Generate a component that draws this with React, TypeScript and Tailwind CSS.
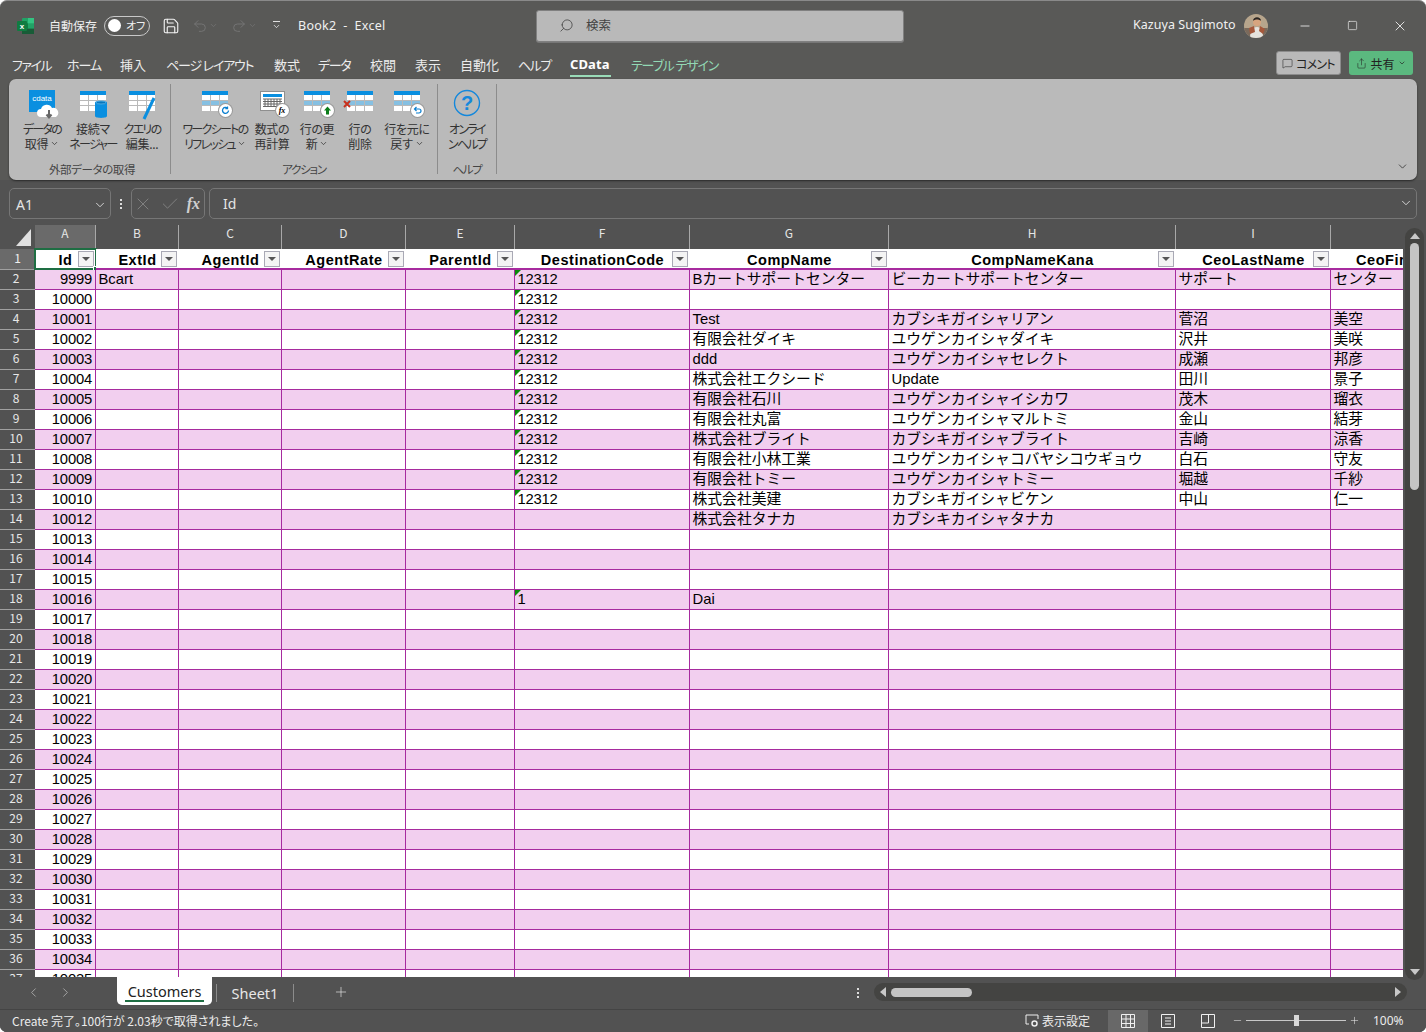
import React from 'react';
import { ChevronDown, ChevronLeft, ChevronRight, Minus, Plus, Square, X, Check, Search, Save, Undo2, Redo2, MessageSquare, Share } from 'lucide-react';

const ui = "[font-family:'Noto_Sans_CJK_JP','Noto_Sans',sans-serif] [font-feature-settings:'palt']";

const menus: [string, string, string][] = [
  ['ファイル', 'w-[55px]', 'tracking-[-1.5px]'],
  ['ホーム', 'w-[53px]', 'tracking-[-1px]'],
  ['挿入', 'w-[46px]', ''],
  ['ページ レイアウト', 'w-[108px]', 'tracking-[-1.2px]'],
  ['数式', 'w-[44px]', ''],
  ['データ', 'w-[52px]', 'tracking-[-1.3px]'],
  ['校閲', 'w-[45px]', ''],
  ['表示', 'w-[45px]', ''],
  ['自動化', 'w-[58px]', ''],
  ['ヘルプ', 'w-[52px]', 'tracking-[-1.5px]'],
];

const columns = [
  { letter: 'A', name: 'Id', width: 'w-[61px]' },
  { letter: 'B', name: 'ExtId', width: 'w-[83px]' },
  { letter: 'C', name: 'AgentId', width: 'w-[103px]' },
  { letter: 'D', name: 'AgentRate', width: 'w-[124px]' },
  { letter: 'E', name: 'ParentId', width: 'w-[109px]' },
  { letter: 'F', name: 'DestinationCode', width: 'w-[175px]' },
  { letter: 'G', name: 'CompName', width: 'w-[199px]' },
  { letter: 'H', name: 'CompNameKana', width: 'w-[287px]' },
  { letter: 'I', name: 'CeoLastName', width: 'w-[155px]' },
  { letter: '', name: 'CeoFirstName', width: 'w-[155px]' },
];

const filled: Record<number, string[]> = {
  2: ['Bcart', '12312', 'Bカートサポートセンター', 'ビーカートサポートセンター', 'サポート', 'センター'],
  3: ['', '12312', '', '', '', ''],
  4: ['', '12312', 'Test', 'カブシキガイシャリアン', '菅沼', '美空'],
  5: ['', '12312', '有限会社ダイキ', 'ユウゲンカイシャダイキ', '沢井', '美咲'],
  6: ['', '12312', 'ddd', 'ユウゲンカイシャセレクト', '成瀬', '邦彦'],
  7: ['', '12312', '株式会社エクシード', 'Update', '田川', '景子'],
  8: ['', '12312', '有限会社石川', 'ユウゲンカイシャイシカワ', '茂木', '瑠衣'],
  9: ['', '12312', '有限会社丸富', 'ユウゲンカイシャマルトミ', '金山', '結芽'],
  10: ['', '12312', '株式会社ブライト', 'カブシキガイシャブライト', '吉崎', '涼香'],
  11: ['', '12312', '有限会社小林工業', 'ユウゲンカイシャコバヤシコウギョウ', '白石', '守友'],
  12: ['', '12312', '有限会社トミー', 'ユウゲンカイシャトミー', '堀越', '千紗'],
  13: ['', '12312', '株式会社美建', 'カブシキガイシャビケン', '中山', '仁一'],
  14: ['', '', '株式会社タナカ', 'カブシキカイシャタナカ', '', ''],
  18: ['', '1', 'Dai', '', '', ''],
};

const rowId = (n: number) => (n === 2 ? 9999 : n <= 13 ? 9997 + n : 9998 + n);
const rowNumbers = Array.from({ length: 36 }, (_, i) => i + 2);

// kana-only ribbon lines sit tighter than kanji in the original UI font
const isKana = (s: string) => /^[ァ-ヶーの]+$/.test(s);

// table glyph used by most of the ribbon buttons
const TableIcon = ({ band = false }: { band?: boolean }) => (
  <svg width="26" height="20" viewBox="0 0 26 20" className="block">
    <rect x="0" y="0" width="26" height="20" fill="#fff" />
    <rect x="0" y="0" width="26" height="4" fill="#0a8fe0" />
    {band && <rect x="0" y="10" width="26" height="4" fill="#86c0e2" />}
    <path d="M0 9.500H26M0 14.500H26M8.500 4V20M17.500 4V20" stroke="#b9b9b9" strokeWidth="1" />
  </svg>
);

const Badge = ({ children }: { children: React.ReactNode }) => (
  <span className="absolute right-[-4px] bottom-[-6px] flex h-[13px] w-[13px] items-center justify-center rounded-full bg-white shadow-[0_0_0_1px_#9a9a9a]">
    {children}
  </span>
);

const DataIcon = () => (
  <svg width="30" height="30" viewBox="0 0 30 30" className="-mt-[1px] ml-[4px] block">
    <rect x="0" y="0" width="26" height="22" fill="#0a8fe0" />
    <text x="13" y="11" textAnchor="middle" fontSize="8" fill="#fff" fontFamily="'Liberation Sans'">cdata</text>
    <path d="M12 27a4 4 0 0 1 0-8 6 6 0 0 1 11-1 5 5 0 0 1 4 9z" fill="#fff" />
    <path d="M20 20v7m-2.500-2.500 2.500 3 2.500-3" stroke="#666" strokeWidth="2" fill="none" />
  </svg>
);

const ConnIcon = () => (
  <div className="relative">
    <TableIcon />
    <svg width="12" height="18" viewBox="0 0 12 18" className="absolute right-[-1px] top-[9px]">
      <path d="M0 2.500C0 0 12 0 12 2.500V16c0 2.500-12 2.500-12 0z" fill="#0a8fe0" />
      <ellipse cx="6" cy="2.500" rx="5" ry="1.500" fill="#0877bd" stroke="#7cc4ee" strokeWidth=".6" />
    </svg>
  </div>
);

const QueryIcon = () => (
  <div className="relative">
    <TableIcon />
    <svg width="14" height="28" viewBox="0 0 14 28" className="absolute right-[-1px] top-[6px]">
      <path d="M12 1 2 22" stroke="#0a8fe0" strokeWidth="3" />
    </svg>
  </div>
);

const RefreshIcon = () => (
  <div className="relative">
    <TableIcon band />
    <Badge>
      <svg width="9" height="9" viewBox="0 0 9 9"><path d="M7.500 4.500a3 3 0 1 1-1-2.300M6.500 .5v2.200H4.300" stroke="#0a7fd0" strokeWidth="1.300" fill="none" /></svg>
    </Badge>
  </div>
);

const RecalcIcon = () => (
  <div className="relative">
    <svg width="25" height="20" viewBox="0 0 25 20" className="block">
      <rect x=".5" y=".5" width="24" height="19" fill="#fff" stroke="#8f8f8f" />
      <rect x="3" y="3" width="19" height="3" fill="#0a8fe0" />
      <path d="M3 8h19M3 10.500h19M3 13h19M3 15.500h19M5 8v8M8 8v8M11 8v8M14 8v8M17 8v8M20 8v8" stroke="#666" strokeWidth="1" />
    </svg>
    <Badge><span className="text-[8px] leading-none italic font-bold text-black [font-family:'Liberation_Serif',serif]">fx</span></Badge>
  </div>
);

const UpdateIcon = () => (
  <div className="relative">
    <TableIcon band />
    <Badge>
      <svg width="9" height="9" viewBox="0 0 9 9"><path d="M4.500 .5 8 4.500H6V8.500H3V4.500H1z" fill="#0c7d1a" /></svg>
    </Badge>
  </div>
);

const DeleteIcon = () => (
  <div className="relative">
    <TableIcon band />
    <svg width="8" height="8" viewBox="0 0 8 8" className="absolute left-[-4px] top-[9px]">
      <path d="M1 1 7 7M7 1 1 7" stroke="#c8301c" strokeWidth="2" />
    </svg>
  </div>
);

const RevertIcon = () => (
  <div className="relative">
    <TableIcon band />
    <Badge>
      <svg width="9" height="9" viewBox="0 0 9 9"><path d="M2 3h4a2 2 0 0 1 0 4H3M3.500 1 1.500 3l2 2" stroke="#0a7fd0" strokeWidth="1.200" fill="none" /></svg>
    </Badge>
  </div>
);

const HelpIcon = () => (
  <svg width="28" height="28" viewBox="0 0 28 28" className="block">
    <circle cx="14" cy="14" r="12.500" fill="none" stroke="#1488dc" strokeWidth="1.400" />
    <text x="14" y="21" textAnchor="middle" fontSize="20" fontWeight="700" fill="#1488dc" fontFamily="'Liberation Sans'">?</text>
  </svg>
);

const RibbonButton = ({ icon, lines, caret, width, top = 'h-[37px]' }: { icon: React.ReactNode; lines: string[]; caret?: boolean; width: string; top?: string }) => (
  <div className={`flex shrink-0 flex-col items-center ${width}`}>
    <div className={`flex items-start justify-center pt-[7px] ${top}`}>{icon}</div>
    <div className="flex flex-col items-center text-[12px] leading-[15px] text-[#333] whitespace-nowrap">
      <span className={isKana(lines[0]) ? 'tracking-[-1.7px]' : 'tracking-[-0.3px]'}>{lines[0]}</span>
      <span className="flex items-center gap-[2px]">
        <span className={isKana(lines[1]) ? 'tracking-[-1.7px]' : 'tracking-[-0.3px]'}>{lines[1]}</span>
        {caret && <ChevronDown size={9} strokeWidth={2} />}
      </span>
    </div>
  </div>
);

const RibbonGroup = ({ label, width, inset = '', children }: { label: string; width: string; inset?: string; children: React.ReactNode }) => (
  <div className={`flex shrink-0 flex-col border-r border-[#8c8c8c] ${width}`}>
    <div className={`flex flex-1 ${inset}`}>{children}</div>
    <div className={`-mb-[3px] text-center text-[11.500px] leading-[16px] text-[#444] ${isKana(label) ? 'tracking-[-1.200px]' : 'pr-[4px] tracking-[-0.4px]'}`}>{label}</div>
  </div>
);

const TitleBar = () => (
  <div className="flex h-[49px] shrink-0 items-center text-[12px] text-[#f0f0f0]">
    <svg width="18" height="18" viewBox="0 0 18 18" className="ml-[17px] shrink-0">
      <rect x="5" y="1" width="12" height="16" rx="1" fill="#21a366" />
      <rect x="11" y="1" width="6" height="5.300" fill="#33c481" />
      <rect x="5" y="6.300" width="6" height="5.300" fill="#107c41" />
      <rect x="5" y="11.600" width="12" height="5.400" fill="#185c37" />
      <rect x="0" y="4" width="10" height="10" rx="1" fill="#107c41" />
      <text x="5" y="12" textAnchor="middle" fontSize="8" fontWeight="700" fill="#fff" fontFamily="'Liberation Sans'">x</text>
    </svg>
    <span className="ml-[14px] w-[55px] shrink-0">自動保存</span>
    <div className="flex h-[20px] w-[46px] shrink-0 items-center gap-[5px] rounded-full border border-[#c8c8c8] pl-[3px] text-[11px]">
      <span className="h-[13px] w-[13px] rounded-full bg-white" />
      <span>オフ</span>
    </div>
    <Save size={18} strokeWidth={1.500} className="ml-[12px] shrink-0 text-[#f4f4f4]" />
    <Undo2 size={16} strokeWidth={1.500} className="ml-[12px] shrink-0 text-[#747474]" />
    <ChevronDown size={9} className="ml-[1px] shrink-0 text-[#747474]" />
    <Redo2 size={16} strokeWidth={1.500} className="ml-[13px] shrink-0 text-[#747474]" />
    <ChevronDown size={9} className="ml-[1px] shrink-0 text-[#747474]" />
    <div className="ml-[14px] flex w-[10px] shrink-0 flex-col items-center">
      <span className="mb-[1px] h-px w-[7px] bg-[#e0e0e0]" />
      <ChevronDown size={9} strokeWidth={2} className="-mt-[1px]" />
    </div>
    <span className="ml-[17px] w-[238px] shrink-0 whitespace-pre pt-[1px] text-[12.500px] tracking-[0.25px] [font-family:'Noto_Sans',sans-serif]">Book2  -  Excel</span>
    <div className="flex h-[32px] w-[368px] shrink-0 items-center gap-[12px] rounded-[3px] border border-[#808080] bg-[#b9b9b9] pl-[22px] text-[12.500px] text-[#444] shadow-[0_1px_0_#777]">
      <Search size={15} strokeWidth={1.300} className="-scale-x-100" />
      <span>検索</span>
    </div>
    <span className="ml-[229px] w-[111px] shrink-0 text-[12.500px] tracking-[0.05px] [font-family:'Noto_Sans',sans-serif]">Kazuya Sugimoto</span>
    <svg width="24" height="24" viewBox="0 0 24 24" className="shrink-0">
      <clipPath id="avatar"><circle cx="12" cy="12" r="12" /></clipPath>
      <g clipPath="url(#avatar)">
        <rect width="24" height="24" fill="#b7a58c" />
        <rect x="0" y="14" width="24" height="10" fill="#7a6a5c" />
        <circle cx="13" cy="8" r="4" fill="#d7a57f" />
        <path d="M9 7c0-5 8-5 8 0-2-2-6-2-8 0z" fill="#2a2522" />
        <path d="M6 24c0-8 3-11 7-11s6 4 6 11z" fill="#e5e3de" />
        <path d="M5 14l5-2 1 6-5 2zM16 12l5 3-2 5-4-3z" fill="#a5583b" />
      </g>
    </svg>
    <Minus size={14} strokeWidth={1.400} className="ml-[30px] shrink-0 text-[#f4f4f4]" />
    <Square size={11} strokeWidth={1.400} className="ml-[35px] shrink-0 text-[#f4f4f4]" />
    <X size={16} strokeWidth={1.300} className="ml-[34px] shrink-0 text-[#f4f4f4]" />
  </div>
);

const MenuBar = () => (
  <div className="flex h-[29px] shrink-0 items-start pl-[12px] text-[13px] leading-[29px] text-[#ececec]">
    {menus.map(([label, width, spacing]) => (
      <span key={label} className={`shrink-0 whitespace-nowrap ${width} ${spacing}`}>{label}</span>
    ))}
    <span className="relative w-[61px] shrink-0 font-bold text-white tracking-[0.1px] [font-family:'Noto_Sans',sans-serif]">
      CData
      <span className="absolute left-0 top-[25px] h-[2px] w-[41px] bg-[#9adcb8]" />
    </span>
    <span className="whitespace-nowrap tracking-[-1.2px] text-[#92d8b4]">テーブル デザイン</span>
    <div className="ml-auto mr-[13px] flex items-center gap-[8px] pt-[1px]">
      <span className="flex h-[24px] w-[65px] items-center justify-center gap-[3px] rounded-[3px] border border-[#8c8c8c] bg-[#b9b9b9] text-[12px] tracking-[-0.8px] text-[#222]">
        <MessageSquare size={11} strokeWidth={1.200} />
        コメント
      </span>
      <span className="flex h-[24px] w-[64px] items-center justify-center gap-[3px] rounded-[3px] bg-[#5bb97f] text-[12px] text-[#222]">
        <Share size={11} strokeWidth={1.200} />
        共有
        <ChevronDown size={8} strokeWidth={2} />
      </span>
    </div>
  </div>
);

const Ribbon = () => (
  <div className="relative mx-[9px] flex h-[101px] w-[1408px] shrink-0 items-stretch rounded-[7px] bg-[#bababa] pt-[5px] pb-[6px] pl-[9px] shadow-[0_1px_2px_rgba(0,0,0,0.5)]">
    <RibbonGroup label="外部データの取得" width="w-[153px]">
      <RibbonButton width="w-[48px]" icon={<DataIcon />} lines={['データの', '取得']} caret />
      <RibbonButton width="w-[54px]" icon={<ConnIcon />} lines={['接続マ', 'ネージャー']} />
      <RibbonButton width="w-[44px]" icon={<QueryIcon />} lines={['クエリの', '編集...']} />
    </RibbonGroup>
    <RibbonGroup label="アクション" width="w-[267px]" inset="pl-[8px]">
      <RibbonButton width="w-[72px]" icon={<RefreshIcon />} lines={['ワークシートの', 'リフレッシュ']} caret />
      <RibbonButton width="w-[42px]" icon={<RecalcIcon />} lines={['数式の', '再計算']} />
      <RibbonButton width="w-[48px]" icon={<UpdateIcon />} lines={['行の更', '新']} caret />
      <RibbonButton width="w-[38px]" icon={<DeleteIcon />} lines={['行の', '削除']} />
      <RibbonButton width="w-[56px]" icon={<RevertIcon />} lines={['行を元に', '戻す']} caret />
    </RibbonGroup>
    <RibbonGroup label="ヘルプ" width="w-[59px]" inset="pl-[4px]">
      <RibbonButton width="w-[50px]" icon={<HelpIcon />} top="h-[39px] -mt-[2px]" lines={['オンライ', 'ンヘルプ']} />
    </RibbonGroup>
    <ChevronDown size={13} strokeWidth={1.500} className="absolute right-[8px] bottom-[7px] text-[#333]" />
  </div>
);

const FormulaBar = () => (
  <div className="mx-[9px] mt-[8px] flex h-[31px] shrink-0 items-stretch text-[14px] text-[#e4e4e4]">
    <div className="flex w-[102px] items-center justify-between rounded-[5px] border border-[#767676] pl-[6px] pr-[3px] pt-[2px] [font-family:'Noto_Sans',sans-serif]">
      A1
      <ChevronDown size={14} strokeWidth={1.500} />
    </div>
    <div className="flex w-[20px] flex-col items-center justify-center gap-[2px]">
      <span className="h-[2px] w-[2px] bg-[#ddd]" />
      <span className="h-[2px] w-[2px] bg-[#ddd]" />
      <span className="h-[2px] w-[2px] bg-[#ddd]" />
    </div>
    <div className="flex w-[74px] items-center justify-between rounded-[5px] border border-[#767676] pl-[1px] pr-[4px] text-[#8f8f8f]">
      <X size={20} strokeWidth={0.900} />
      <Check size={20} strokeWidth={0.900} />
      <span className="text-[16px] font-bold italic text-[#d0d0d0] [font-family:'Liberation_Serif',serif]">fx</span>
    </div>
    <div className="ml-[4px] flex flex-1 items-center justify-between rounded-[5px] border border-[#767676] pl-[13px] pr-[3px] pb-[1px] [font-family:'Noto_Sans',sans-serif]">
      Id
      <ChevronDown size={14} strokeWidth={1.500} />
    </div>
  </div>
);

const cellFont = "[font-family:'Liberation_Sans','Noto_Sans_CJK_JP',sans-serif] [font-feature-settings:normal]";

const HeaderRow = () => (
  <div className="flex h-[24px] shrink-0 bg-[#525252] text-[12px] text-[#e6e6e6]">
    <div className="flex w-[35px] shrink-0 items-end justify-end pb-[3px] pr-[4px]">
      <span className="h-0 w-0 border-b-[17px] border-l-[15px] border-b-[#e0e0e0] border-l-transparent" />
    </div>
    {columns.map((c, i) => (
      <div key={c.name} className={`flex shrink-0 justify-center border-r border-[#a8a8a8] leading-[16px] ${c.width} ${i === 0 ? 'bg-[#6a6a6a]' : ''}`}>
        {c.letter}
      </div>
    ))}
  </div>
);

const FilterRow = () => (
  <div className={`flex h-[21px] shrink-0 ${cellFont}`}>
    <div className={`flex w-[35px] shrink-0 items-center justify-center border-b border-[#a0a0a0] bg-[#6a6a6a] pb-[2px] text-[12px] text-[#f0f0f0] ${ui}`}>1</div>
    {columns.map((c, i) => (
      <div key={c.name} className={`relative flex shrink-0 items-center justify-center border-b-2 border-[#a72b9f] bg-white pt-[3px] text-[14.500px] leading-[16px] font-bold tracking-[0.55px] whitespace-nowrap text-black ${c.width}`}>
        {c.name}
        <span className="absolute right-[2px] top-[2px] flex h-[16px] w-[16px] items-center justify-center border border-[#a9a9b5] bg-[#f4f4f4]">
          <span className="h-0 w-0 border-x-[4px] border-t-[4px] border-x-transparent border-t-[#555]" />
        </span>
        {i === 0 && (
          <>
            <span className="absolute -top-px -left-px -right-px -bottom-[2px] border-2 border-[#1e6e43]" />
            <span className="absolute -right-[3px] -bottom-[4px] h-[6px] w-[6px] border border-white bg-[#1e6e43]" />
          </>
        )}
      </div>
    ))}
  </div>
);

const DataRow = ({ n }: { n: number }) => {
  const row = filled[n];
  const pink = n % 2 === 0;
  const values = ['', row?.[0] ?? '', '', '', '', row?.[1] ?? '', row?.[2] ?? '', row?.[3] ?? '', row?.[4] ?? '', row?.[5] ?? ''];
  return (
    <div className="flex h-[20px] shrink-0">
      <div className={`flex w-[35px] shrink-0 items-center justify-center border-b border-[#a0a0a0] bg-[#525252] pr-[3px] pb-[4px] text-[12px] text-[#e8e8e8] ${ui}`}>{n}</div>
      {columns.map((c, i) => (
        <div key={c.name} className={`relative flex shrink-0 items-center overflow-hidden border-r border-b border-[#a72b9f] pb-[1px] text-[14.800px] leading-[17px] whitespace-nowrap text-black ${c.width} ${pink ? 'bg-[#f2cfef]' : 'bg-white'} ${i === 0 ? 'justify-end pr-[3px] tracking-[-0.2px]' : 'pl-[2.500px]'} ${i === 5 ? 'tracking-[-0.2px]' : ''}`}>
          {i === 0 ? rowId(n) : values[i]}
          {i === 5 && values[i] && <span className="absolute left-0 top-0 h-0 w-0 border-r-[6px] border-t-[6px] border-r-transparent border-t-[#0a8a0a]" />}
        </div>
      ))}
    </div>
  );
};

const VerticalScroll = () => (
  <div className="flex w-[23px] shrink-0 flex-col bg-[#525252] px-[2px] pt-[3px]">
    <div className="relative z-10 flex h-[752px] shrink-0 flex-col items-center rounded-full bg-[#444442] py-[5px]">
      <span className="h-0 w-0 border-x-[5px] border-b-[6px] border-x-transparent border-b-[#c8c8c8]" />
      <span className="mt-[4px] mb-auto h-[247px] w-[9px] rounded-full bg-[#c4c4c4]" />
      <span className="h-0 w-0 border-x-[5px] border-t-[6px] border-x-transparent border-t-[#c8c8c8]" />
    </div>
  </div>
);

const SheetTabs = () => (
  <div className="flex h-[32px] shrink-0 items-start bg-[#525252] text-[#e8e8e8]">
    <ChevronLeft size={15} strokeWidth={1.200} className="ml-[26px] mt-[8px] shrink-0 text-[#bbb]" />
    <ChevronRight size={15} strokeWidth={1.200} className="ml-[17px] mt-[8px] shrink-0 text-[#bbb]" />
    <div className="relative ml-[44px] flex h-[28px] w-[95px] shrink-0 items-start justify-center rounded-b-[5px] bg-white pt-[4px] text-[14.500px] leading-[20px] text-[#222] [font-family:'Noto_Sans',sans-serif]">
      Customers
      <span className="absolute left-[8px] right-[8px] bottom-[3px] h-[2px] bg-[#1e6e43]" />
    </div>
    <span className="ml-[4px] mt-[7px] h-[18px] w-px shrink-0 bg-[#8c8c8c]" />
    <span className="w-[76px] shrink-0 pt-[6px] text-center text-[14.500px] leading-[20px] [font-family:'Noto_Sans',sans-serif]">Sheet1</span>
    <span className="mt-[7px] h-[18px] w-px shrink-0 bg-[#8c8c8c]" />
    <Plus size={16} strokeWidth={1} className="ml-[39px] mt-[7px] shrink-0" />
    <div className="ml-[501px] mt-[11px] flex w-[16px] shrink-0 flex-col items-center gap-[2px]">
      <span className="h-[2px] w-[2px] bg-[#ddd]" />
      <span className="h-[2px] w-[2px] bg-[#ddd]" />
      <span className="h-[2px] w-[2px] bg-[#ddd]" />
    </div>
    <div className="mt-[6px] ml-[8px] flex h-[18px] w-[533px] shrink-0 items-center rounded-full bg-[#444442] px-[6px]">
      <span className="h-0 w-0 border-y-[5px] border-r-[6px] border-y-transparent border-r-[#c8c8c8]" />
      <span className="ml-[5px] h-[9px] w-[81px] rounded-full bg-[#c4c4c4]" />
      <span className="ml-auto h-0 w-0 border-y-[5px] border-l-[6px] border-y-transparent border-l-[#c8c8c8]" />
    </div>
  </div>
);

const StatusBar = () => (
  <div className="flex h-[23px] shrink-0 items-center border-t border-[#444] bg-[#525252] pb-[1px] pl-[12px] text-[12px] text-[#ececec]">
    <span className="whitespace-nowrap">Create 完了。100行が 2.03秒で取得されました。</span>
    <svg width="15" height="14" viewBox="0 0 15 14" className="ml-auto shrink-0">
      <path d="M4 10H1V1h12v4" stroke="#eee" strokeWidth="1" fill="none" />
      <circle cx="9.500" cy="9.500" r="2.500" stroke="#eee" strokeWidth="1.500" fill="none" />
    </svg>
    <span className="ml-[2px] w-[66px] shrink-0">表示設定</span>
    <div className="flex h-[22px] w-[40px] shrink-0 items-center justify-center bg-[#686868]">
      <svg width="14" height="14" viewBox="0 0 14 14"><path d="M.5.500h13v13H.5zM.5 5h13M.5 9.500h13M5 .5v13M9.500.5v13" stroke="#f0f0f0" fill="none" /></svg>
    </div>
    <svg width="14" height="14" viewBox="0 0 14 14" className="ml-[13px] shrink-0"><path d="M.5.500h13v13H.5zM4 4h6M4 7h6M4 10h6" stroke="#f0f0f0" fill="none" /></svg>
    <svg width="14" height="14" viewBox="0 0 14 14" className="ml-[26px] shrink-0"><path d="M.5.500h13v13H.5zM.5 9h7V.5" stroke="#f0f0f0" fill="none" /></svg>
    <Minus size={11} strokeWidth={1.200} className="ml-[17px] shrink-0" />
    <div className="relative ml-[3px] h-px w-[100px] shrink-0 bg-[#c8c8c8]">
      <span className="absolute left-[48px] -top-[5px] h-[11px] w-[5px] bg-[#d8d8d8]" />
    </div>
    <Plus size={11} strokeWidth={1.200} className="ml-[3px] shrink-0" />
    <span className="ml-[13px] w-[53px] shrink-0 [font-family:'Noto_Sans',sans-serif]">100%</span>
  </div>
);

export default function App() {
  return (
    <div className={`flex h-[1032px] w-[1426px] flex-col overflow-hidden rounded-[7px] border-t border-[#8a8a8a] bg-[#595957] ${ui}`}>
      <TitleBar />
      <MenuBar />
      <Ribbon />
      <div className="flex min-h-0 flex-1 flex-col bg-[#525252]">
        <FormulaBar />
        <div className="mt-[6px] flex min-h-0 flex-1">
          <div className="flex min-w-0 flex-1 flex-col overflow-hidden">
            <HeaderRow />
            <FilterRow />
            <div className={`flex min-h-0 flex-1 flex-col overflow-hidden ${cellFont}`}>
              {rowNumbers.map((n) => (
                <DataRow key={n} n={n} />
              ))}
            </div>
          </div>
          <VerticalScroll />
        </div>
        <SheetTabs />
        <StatusBar />
      </div>
    </div>
  );
}
